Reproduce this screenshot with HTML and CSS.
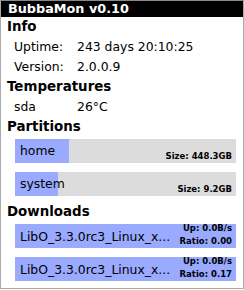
FILE: index.html
```html
<!DOCTYPE html>
<html>
<head>
<meta charset="utf-8">
<link rel="stylesheet" href="styles.css">
</head>
<body>
<div class="app">
  <div class="title">BubbaMon v0.10</div>
  <div class="heading">Info</div>
  <div class="row"><span class="label">Uptime:</span><span>243 days 20:10:25</span></div>
  <div class="row"><span class="label">Version:</span><span>2.0.0.9</span></div>
  <div class="heading">Temperatures</div>
  <div class="row"><span class="label">sda</span><span>26°C</span></div>
  <div class="heading">Partitions</div>
  <div class="bars parts">
    <div class="bar part">
      <div class="fill" style="width:54px"></div>
      <span class="name">home</span>
      <span class="size">Size: 448.3GB</span>
    </div>
    <div class="bar part">
      <div class="fill" style="width:43px"></div>
      <span class="name">system</span>
      <span class="size">Size: 9.2GB</span>
    </div>
  </div>
  <div class="heading dl-heading">Downloads</div>
  <div class="bars">
    <div class="bar dl">
      <span class="name">LibO_3.3.0rc3_Linux_x...</span>
      <span class="stats"><span>Up: 0.0B/s</span><span>Ratio: 0.00</span></span>
    </div>
    <div class="bar dl">
      <span class="name">LibO_3.3.0rc3_Linux_x...</span>
      <span class="stats"><span>Up: 0.0B/s</span><span>Ratio: 0.17</span></span>
    </div>
  </div>
</div>
</body>
</html>
```
FILE: styles.css
```css
html, body {
  margin: 0;
  padding: 0;
  background: #fff;
}
body {
  font-family: "DejaVu Sans", sans-serif;
  color: #000;
}
.app {
  width: 244px;
  height: 289px;
  box-sizing: border-box;
  border: 1px solid #aaaaaa;
  border-top: 1px solid #888;
  display: flex;
  flex-direction: column;
}
.title {
  background: #000;
  color: #fff;
  font-weight: bold;
  font-size: 12.8px;
  line-height: 16px;
  height: 16px;
  padding-left: 7px;
}
.heading {
  font-weight: bold;
  font-size: 13.4px;
  line-height: 20px;
  padding-left: 6px;
}
.row {
  display: flex;
  font-size: 12.4px;
  line-height: 20px;
  padding-left: 13px;
}
.label {
  width: 63px;
  flex: none;
}
.bars {
  display: flex;
  flex-direction: column;
  gap: 9px;
  margin: 2px 7px 0 14px;
}
.bar {
  position: relative;
  height: 24px;
  display: flex;
  justify-content: space-between;
  padding: 0 4px 0 5px;
}
.part {
  background: #dcdcdc;
}
.fill {
  position: absolute;
  left: 0;
  top: 0;
  bottom: 0;
  background: #99aaff;
}
.name {
  position: relative;
  font-size: 12.4px;
  line-height: 14px;
}
.part .name {
  padding-top: 5px;
}
.size {
  position: relative;
  font-size: 8.5px;
  font-weight: bold;
  align-self: flex-end;
  line-height: 10px;
  padding-bottom: 2px;
}
.dl-heading {
  margin-top: 6px;
}
.dl {
  background: #99aaff;
  align-items: center;
}
.dl .name {
  padding-top: 2px;
}
.stats {
  display: flex;
  flex-direction: column;
  align-items: flex-end;
  font-size: 8.5px;
  font-weight: bold;
  line-height: 13px;
  margin-top: -2px;
}
```
